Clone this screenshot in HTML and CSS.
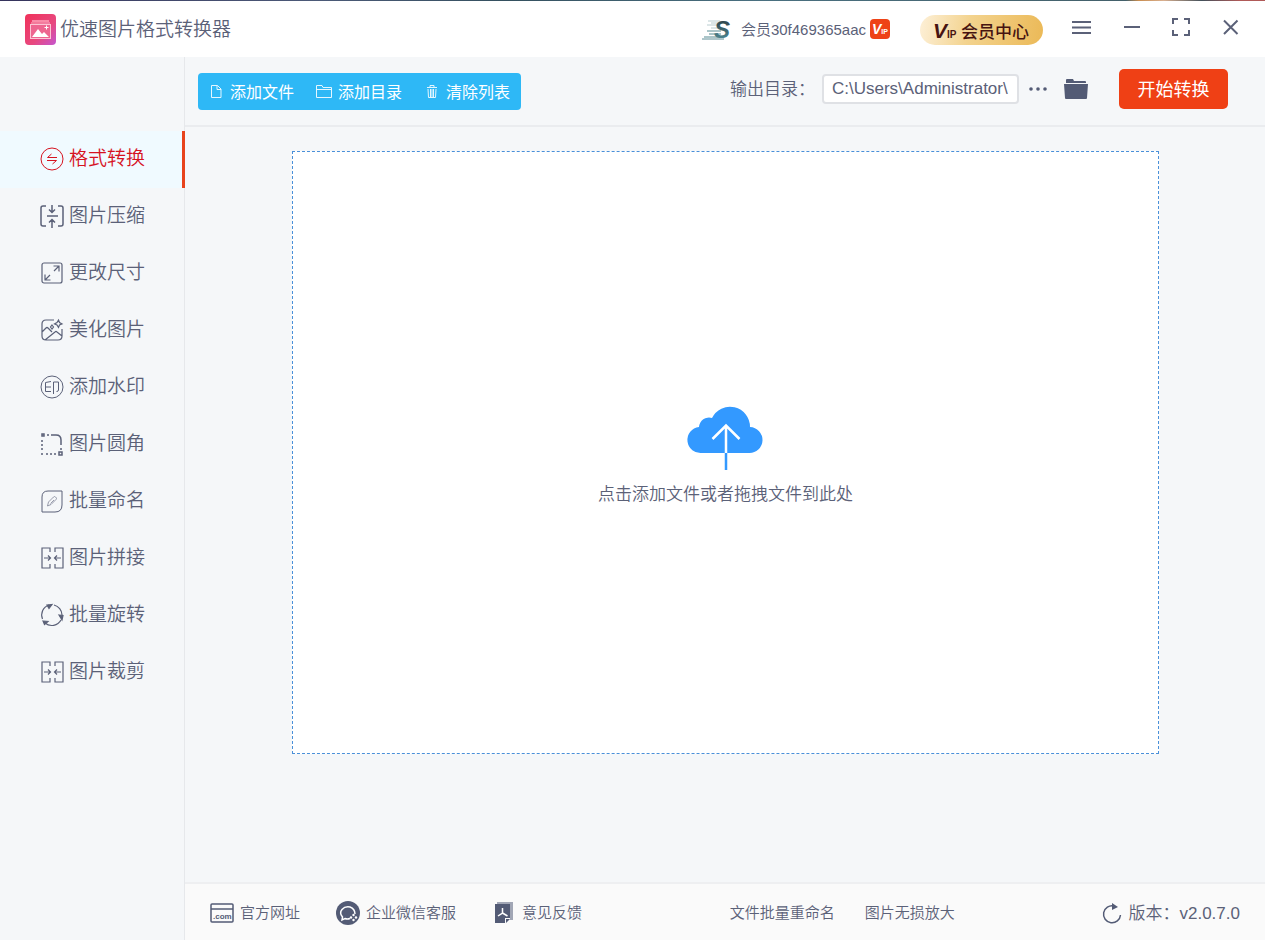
FILE: index.html
```
<!DOCTYPE html>
<html lang="zh-CN">

<head>
    <meta charset="UTF-8">
    <meta name="viewport" content="width=device-width, initial-scale=1.0">
    <title>优速图片格式转换器</title>
    <link rel="stylesheet" href="styles.css">
</head>

<body>
    <header class="header">
        <svg class="logo" viewBox="0 0 31 31">
            <defs>
                <linearGradient id="logoBg" x1="0" y1="0" x2="1" y2="1">
                    <stop offset="0" stop-color="#f0325a" />
                    <stop offset="0.6" stop-color="#e8487f" />
                    <stop offset="1" stop-color="#c456d0" />
                </linearGradient>
            </defs>
            <rect width="31" height="31" rx="4" fill="url(#logoBg)" />
            <path d="M7 7h17" stroke="#f98ba8" stroke-width="2" />
            <path d="M6 9h19" stroke="#fbb6c8" stroke-width="1" />
            <rect x="5.500" y="10.500" width="20" height="14" fill="#ee6590" stroke="#fcc4d4" />
            <path d="M7 23l6-8 4 5 2-2 5 5z" fill="#fff" />
            <path d="M21.500 11.500v4M19.500 13.500h4" stroke="#fff" />
        </svg>
        <h1 class="title">优速图片格式转换器</h1>

        <div class="user">
            <svg class="avatar" viewBox="0 0 30 24">
                <defs>
                    <linearGradient id="avatarInk" x1="0" y1="0" x2="0" y2="1">
                        <stop offset="0" stop-color="#26343a" />
                        <stop offset="1" stop-color="#5596a2" />
                    </linearGradient>
                </defs>
                <path d="M6 4h12M9 6h7M5 8h10M9 11h7" stroke="#b9cdd0" stroke-width="1" />
                <path d="M5 14h14M7 17h12M2 20h18" stroke="#8fb2b8" stroke-width="1.500" />
                <path d="M0 22h22" stroke="#5f8e98" stroke-width="1" />
                <text x="12" y="21" class="avatar-letter" fill="url(#avatarInk)">S</text>
            </svg>
            <span class="user-name">会员30f469365aac</span>
            <svg class="vip-badge" viewBox="0 0 20 20">
                <rect width="20" height="20" rx="4" fill="#ee4216" />
                <text x="2" y="15" class="vip-v" fill="#fff">V<tspan class="vip-ip">IP</tspan></text>
            </svg>
        </div>

        <button type="button" class="vip-button">
            <svg class="vip-mark" viewBox="0 0 25 22">
                <text x="0" y="19" class="vip-mark-v" fill="#471411">V<tspan class="vip-mark-ip">IP</tspan></text>
            </svg>
            会员中心
        </button>

        <div class="window-controls">
            <button type="button" class="icon-button" aria-label="菜单">
                <svg viewBox="0 0 20 20"><path d="M1 5h19M1 10.500h19M1 16h19" /></svg>
            </button>
            <button type="button" class="icon-button" aria-label="最小化">
                <svg viewBox="0 0 20 20"><path d="M3 10h16" /></svg>
            </button>
            <button type="button" class="icon-button" aria-label="最大化">
                <svg viewBox="0 0 20 20"><path d="M7 2H2v5M13 2h5v5M18 13v5h-5M7 18H2v-5" /></svg>
            </button>
            <button type="button" class="icon-button" aria-label="关闭">
                <svg viewBox="0 0 20 20"><path d="M3 3.500l13.500 13.500M16.500 3.500L3 17" /></svg>
            </button>
        </div>
    </header>

    <div class="layout">
        <nav class="sidebar">
            <a href="#" class="nav-item active">
                <svg class="nav-icon thin" viewBox="0 0 24 24">
                    <circle cx="12" cy="12" r="11" />
                    <path d="M17 10.500H7.500l4-3.500M7 13.500h9.500l-4 3.500" />
                </svg>
                <span>格式转换</span>
            </a>
            <a href="#" class="nav-item">
                <svg class="nav-icon bold" viewBox="0 0 24 24">
                    <path d="M6 2H3Q1 2 1 4v16q0 2 2 2h3M18 2h3q2 0 2 2v16q0 2-2 2h-3M7 12h11M12 1v7M9 5.500l3 3 3-3M12 24v-8M9 18.500l3-3 3 3" />
                </svg>
                <span>图片压缩</span>
            </a>
            <a href="#" class="nav-item">
                <svg class="nav-icon" viewBox="0 0 24 24">
                    <rect x="2" y="2" width="20" height="20" rx="2" />
                    <path d="M14 10l5-5M13.500 5H19v5.500M10 14l-5 5M5 13.500V19h5.500" />
                </svg>
                <span>更改尺寸</span>
            </a>
            <a href="#" class="nav-item">
                <svg class="nav-icon" viewBox="0 0 24 24">
                    <path d="M14 2H6Q2 2 2 6v12q0 4 4 4h12q4 0 4-4v-7M2 14l4-4q1-1 2 0l4 4M5 22l10-8q1-1 2 0l5 4" />
                    <path d="M18.500 2l1 2.500L22 6l-2.500 1-1 2.500-1.500-2.500L14.500 6 17 4.500z" />
                    <path d="M12 7l1.500 2-1.500 2-1.500-2z" />
                </svg>
                <span>美化图片</span>
            </a>
            <a href="#" class="nav-item">
                <svg class="nav-icon thin" viewBox="0 0 24 24">
                    <circle cx="12" cy="12" r="11" />
                    <path d="M11 6.500L5.500 7.500v9H11M5.500 12H11M13.500 19V7h5v8q0 1.500-2 1.500" />
                </svg>
                <span>添加水印</span>
            </a>
            <a href="#" class="nav-item">
                <svg class="nav-icon bold" viewBox="0 0 24 24">
                    <rect x="2" y="2" width="2" height="2" />
                    <rect x="19" y="20" width="3" height="3" />
                    <path d="M7 3h2M2 8v2M2 12v2M2 16v2M2 21v2M6 22h2M10 22h2M14 22h2M21 16v2" />
                    <path d="M11 3h5q5 0 5 5v5" />
                </svg>
                <span>图片圆角</span>
            </a>
            <a href="#" class="nav-item">
                <svg class="nav-icon thin" viewBox="0 0 24 24">
                    <path d="M8 2h14v14q0 7-7 7H2V8q0-6 6-6z" />
                    <path class="faint" d="M7.500 17l1-4 5-5q1-1 2 0l.5.5q1 1 0 2l-5 5zM10.500 14.500l3.500-3.500" />
                </svg>
                <span>批量命名</span>
            </a>
            <a href="#" class="nav-item">
                <svg class="nav-icon" viewBox="0 0 24 24">
                    <path d="M10 6V2H2v20h8v-4M15 6V2h8v20h-8v-4M4 12h6M8 9.500l2.500 2.500L8 14.500M21 12h-6M17 9.500L14.500 12l2.500 2.500" />
                </svg>
                <span>图片拼接</span>
            </a>
            <a href="#" class="nav-item">
                <svg class="nav-icon" viewBox="0 0 24 24">
                    <path d="M2.500 16A10.500 10.500 0 0 1 9 2M14 2a10.500 10.500 0 0 1 8 10M21 17A10.500 10.500 0 0 1 5 20" />
                    <path class="solid" d="M7 2l5-.5-3 4zM19 12l4 .5-1 4.500zM3 18l5 .5-3.500 3z" />
                </svg>
                <span>批量旋转</span>
            </a>
            <a href="#" class="nav-item">
                <svg class="nav-icon" viewBox="0 0 24 24">
                    <path d="M10 6V2H2v20h8v-4M15 6V2h8v20h-8v-4M4 12h6M8 9.500l2.500 2.500L8 14.500M21 12h-6M17 9.500L14.500 12l2.500 2.500" />
                </svg>
                <span>图片裁剪</span>
            </a>
        </nav>

        <main class="main">
            <div class="toolbar">
                <div class="file-actions">
                    <button type="button" class="action">
                        <svg viewBox="0 0 16 16"><path d="M3.500 2.500h6l3.500 3.500v8.500h-9.500zM9 2.500v4h4" /></svg>
                        添加文件
                    </button>
                    <button type="button" class="action">
                        <svg viewBox="0 0 16 16"><path d="M.5 14.500V2.500H6L7 4.500h8.500v10zM.5 6.500h15" /></svg>
                        添加目录
                    </button>
                    <button type="button" class="action">
                        <svg viewBox="0 0 16 16"><path d="M3 4.500h10M6 4V2.500h4V4M4 6l.5 8.500h7L12 6M6.500 6v8M8 6v8M9.500 6v8" /></svg>
                        清除列表
                    </button>
                </div>
                <div class="output">
                    <label for="outputDir">输出目录：</label>
                    <input type="text" id="outputDir" value="C:\Users\Administrator\">
                    <button type="button" class="more" aria-label="更多">
                        <svg viewBox="0 0 20 20"><circle cx="3" cy="10" r="1.800" /><circle cx="10" cy="10" r="1.800" /><circle cx="17" cy="10" r="1.800" /></svg>
                    </button>
                    <button type="button" class="folder" aria-label="打开目录">
                        <svg viewBox="0 0 24 24"><path d="M2 6V3q0-1 1-1h6l1 2h11q1 0 1 1v1zM0 7h24l-1 14q0 1-1 1H2q-1 0-1-1z" /></svg>
                    </button>
                </div>
                <button type="button" class="start">开始转换</button>
            </div>

            <div class="content">
                <button type="button" class="drop-zone">
                    <svg class="cloud" viewBox="0 0 72 62">
                        <path d="M12 45A13 13 0 0 1 9 19A10 10 0 0 1 22 10A20 20 0 0 1 60 19A13 13 0 0 1 59 45z" fill="#3399ff" />
                        <path d="M36 45v17" stroke="#3399ff" stroke-width="2.500" />
                        <path d="M36 45V17M22.500 31L36 17.500 49.500 31" fill="none" stroke="#fff" stroke-width="2.500" />
                    </svg>
                    <span>点击添加文件或者拖拽文件到此处</span>
                </button>
            </div>

            <footer class="footer">
                <a href="#" class="footer-link website">
                    <svg viewBox="0 0 24 24">
                        <rect x="1" y="3" width="22" height="18" rx="1" fill="none" stroke="#535b75" stroke-width="1.500" />
                        <path d="M1 8h22" stroke="#535b75" stroke-width="1.500" />
                        <text x="3" y="18" class="com-text" fill="#535b75">.com</text>
                    </svg>
                    <span>官方网址</span>
                </a>
                <a href="#" class="footer-link service">
                    <svg viewBox="0 0 24 24">
                        <circle cx="12" cy="12" r="12" fill="#535b75" />
                        <path d="M14 17.500q-3 1-5 0l-3 1.500.5-3Q3 12 6 8.500q3-3.500 8-2.500 5 2 5 7" fill="none" stroke="#fff" stroke-width="1.500" />
                        <circle cx="17.500" cy="14" r="1.200" fill="#fff" />
                        <circle cx="15" cy="16.500" r="1.200" fill="#fff" />
                        <circle cx="20" cy="16.500" r="1.200" fill="#fff" />
                        <circle cx="17.500" cy="19" r="1.200" fill="#fff" />
                    </svg>
                    <span>企业微信客服</span>
                </a>
                <a href="#" class="footer-link feedback">
                    <svg viewBox="0 0 24 24">
                        <path d="M5 1h16v18h-3V3H5z" fill="#a1a6b5" />
                        <path d="M3 3h15v14h-5v5H3z" fill="#535b75" />
                        <path d="M14 22v-4h4z" fill="#535b75" />
                        <path d="M10.500 7v5L6 15M10.500 12l5 3" fill="none" stroke="#fff" stroke-width="1.500" />
                    </svg>
                    <span>意见反馈</span>
                </a>
                <a href="#" class="footer-link"><span>文件批量重命名</span></a>
                <a href="#" class="footer-link enlarge"><span>图片无损放大</span></a>
                <button type="button" class="version">
                    <svg viewBox="0 0 20 20">
                        <path d="M12 3A8.500 8.500 0 1 0 18.500 12" fill="none" stroke="#535b75" stroke-width="1.500" />
                        <path d="M10 0l6 4-6 3z" fill="#535b75" />
                    </svg>
                    <span>版本：v2.0.7.0</span>
                </button>
            </footer>
        </main>
    </div>
</body>

</html>
```
FILE: styles.css
```
* {
    box-sizing: border-box;
}

body {
    margin: 0;
    min-height: 100vh;
    display: flex;
    flex-direction: column;
    background: #f5f7f9;
    color: #5b6178;
    font-family: "Liberation Sans", "Noto Sans CJK SC", sans-serif;
    font-weight: 350;
    white-space: nowrap;
}

/* thin strip above the title bar */
body::before {
    content: "";
    height: 1px;
    background: linear-gradient(90deg, #35335c 0%, #4c5a78 25%, #34505f 40%, #4a7080 60%, #43606a 89%, #c98d50 90%, #d9b090 92%, #43505a 95%, #b05a58 98%);
}

a {
    color: inherit;
    text-decoration: none;
}

button {
    padding: 0;
    border: none;
    background: none;
    color: inherit;
    font: inherit;
    cursor: pointer;
}

svg {
    display: block;
    flex: none;
    overflow: visible;
}

/* header */
.header {
    height: 56px;
    display: flex;
    align-items: center;
    padding: 0 24px 0 25px;
    background: #fff;
}

.logo {
    width: 31px;
    height: 31px;
}

.title {
    margin: 0 auto 0 4px;
    padding-bottom: 4px;
    font-size: 19px;
    font-weight: 350;
}

.user {
    display: flex;
    align-items: center;
    font-size: 15px;
}

.avatar {
    width: 30px;
    height: 24px;
    margin-right: 9px;
}

.avatar-letter {
    font-size: 24px;
    font-weight: bold;
    font-style: italic;
}

.user-name {
    padding-bottom: 2px;
}

.vip-badge {
    width: 20px;
    height: 20px;
    margin-left: 4px;
}

.vip-v {
    font-size: 14px;
    font-weight: bold;
    font-style: italic;
}

.vip-ip {
    font-size: 7px;
    font-style: normal;
}

.vip-button {
    height: 30px;
    display: flex;
    align-items: center;
    gap: 3px;
    margin: 2px 28px 0 30px;
    padding: 0 14px 0 13px;
    border-radius: 15px;
    background: linear-gradient(100deg, #fdf0d8, #f3d38e 40%, #ebb957);
    color: #471411;
    font-size: 17px;
    font-weight: 500;
}

.vip-mark {
    width: 25px;
    height: 22px;
}

.vip-mark-v {
    font-size: 21px;
    font-weight: bold;
    font-style: italic;
}

.vip-mark-ip {
    font-size: 10px;
    font-style: normal;
}

.window-controls {
    display: flex;
    gap: 30px;
    padding-bottom: 4px;
}

.icon-button svg {
    width: 20px;
    height: 20px;
    fill: none;
    stroke: #5b6178;
    stroke-width: 2;
}

.layout {
    flex: 1;
    display: flex;
}

/* sidebar */
.sidebar {
    width: 185px;
    flex: none;
    padding-top: 74px;
    border-right: 1px solid #e6e8eb;
}

.nav-item {
    height: 57px;
    display: flex;
    align-items: center;
    gap: 5px;
    padding: 0 0 2px 40px;
    font-size: 19px;
}

.nav-item span {
    padding-bottom: 4px;
}

.nav-item.active {
    margin-right: -1px;
    border-right: 3px solid #e8431c;
    background: #f0faff;
    color: #d6131f;
}

.nav-icon {
    width: 24px;
    height: 24px;
    fill: none;
    stroke: currentColor;
    stroke-width: 1.2;
}

.nav-icon.bold {
    stroke-width: 1.5;
}

.nav-icon.thin {
    stroke-width: 1;
}

.nav-icon .solid {
    fill: currentColor;
}

.nav-icon .faint {
    opacity: 0.6;
}

/* main area */
.main {
    flex: 1;
    display: flex;
    flex-direction: column;
}

.toolbar {
    height: 70px;
    display: flex;
    align-items: center;
    padding: 0 37px 4px 13px;
    border-bottom: 2px solid #eaecef;
}

.file-actions {
    height: 37px;
    display: flex;
    gap: 22px;
    margin-top: 4px;
    padding: 0 11px 0 10px;
    border-radius: 4px;
    background: #2eb8f6;
    color: #fff;
    font-size: 16px;
    font-weight: 400;
}

.action {
    display: flex;
    align-items: center;
    gap: 6px;
}

.action svg {
    width: 16px;
    height: 16px;
    fill: none;
    stroke: #e4f6ff;
}

.output {
    display: flex;
    align-items: center;
    margin-left: auto;
    font-size: 17px;
}

.output label {
    padding-bottom: 4px;
}

.output input {
    width: 197px;
    height: 30px;
    margin-left: 7px;
    padding: 0 8px;
    border: 2px solid #dfe1e5;
    border-radius: 4px;
    background: #fff;
    color: #5b6178;
    font-family: inherit;
    font-size: 17px;
}

.more svg {
    width: 20px;
    height: 20px;
    margin: 0 16px 0 9px;
    fill: #535b75;
}

.folder svg {
    width: 24px;
    height: 24px;
    fill: #535b75;
}

.start {
    width: 109px;
    height: 40px;
    margin-left: 31px;
    padding-bottom: 2px;
    border-radius: 5px;
    background: #ef4015;
    color: #fff;
    font-size: 18px;
    font-weight: 400;
}

.content {
    flex: 1;
    display: flex;
    padding: 24px 106px 128px 107px;
}

.drop-zone {
    flex: 1;
    display: flex;
    flex-direction: column;
    align-items: center;
    justify-content: center;
    gap: 10px;
    padding-top: 8px;
    border: 1px dashed #4a90d9;
    background: #fff;
    font-size: 17px;
}

.cloud {
    width: 72px;
    height: 62px;
}

/* footer */
.footer {
    height: 58px;
    display: flex;
    align-items: center;
    padding: 2px 25px 0;
    border-top: 2px solid #eeeff1;
    background: #fafafa;
    font-size: 15px;
}

.footer span {
    padding-bottom: 4px;
}

.footer-link {
    display: flex;
    align-items: center;
    gap: 6px;
}

.footer-link svg {
    width: 24px;
    height: 24px;
}

.com-text {
    font-size: 8px;
    font-weight: bold;
}

.service {
    margin-left: 36px;
}

.feedback {
    margin: 0 auto 0 36px;
}

.enlarge {
    margin: 0 auto 0 30px;
}

.version {
    display: flex;
    align-items: center;
    gap: 6px;
    font-size: 17px;
}

.version svg {
    width: 20px;
    height: 20px;
}
```
